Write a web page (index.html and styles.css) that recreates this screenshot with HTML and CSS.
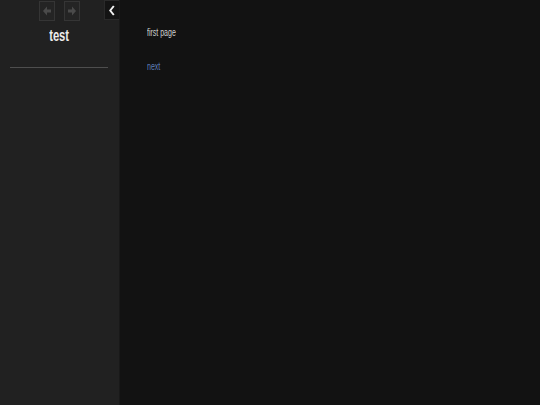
FILE: index.html
```html
<!DOCTYPE html>
<html>
<head>
<meta charset="utf-8">
<link rel="stylesheet" href="styles.css">
</head>
<body>
<div class="app">
  <aside class="sidebar">
    <div class="toolbar">
      <div class="nav">
        <button class="nav-btn" aria-label="back">
          <svg width="8" height="10" viewBox="0 0 8 10"><path d="M4 0.5 L0 5 L4 9.5 V6.5 H8 V3.5 H4 Z" fill="#4a4a4a"/></svg>
        </button>
        <button class="nav-btn" aria-label="forward">
          <svg width="8" height="10" viewBox="0 0 8 10"><path d="M4 0.5 L8 5 L4 9.5 V6.5 H0 V3.5 H4 Z" fill="#4a4a4a"/></svg>
        </button>
      </div>
      <button class="collapse" aria-label="collapse">
        <svg width="6" height="11" viewBox="0 0 6 11"><path d="M4.8 1 L1.2 5.5 L4.8 10" fill="none" stroke="#f2f2f2" stroke-width="2"/></svg>
      </button>
    </div>
    <h1 class="title"><span class="squeeze-bold">test</span></h1>
    <hr class="rule">
  </aside>
  <main class="content">
    <p class="page-text"><span class="squeeze">first page</span></p>
    <p class="page-link"><a href="#" class="squeeze">next</a></p>
  </main>
</div>
</body>
</html>
```

FILE: styles.css
```css
html, body {
  margin: 0;
  padding: 0;
  height: 100%;
  background: #121212;
  font-family: "Liberation Sans", Arial, sans-serif;
}

.app {
  display: flex;
  height: 405px;
}

.sidebar {
  width: 119px;
  flex: 0 0 119px;
  background: #212121;
  border-right: 1px solid #191919;
  display: flex;
  flex-direction: column;
}

.toolbar {
  display: flex;
  height: 21px;
}

.nav {
  display: flex;
  gap: 9px;
  margin-left: 39px;
  padding-top: 1px;
}

.nav-btn {
  width: 16px;
  height: 20px;
  box-sizing: border-box;
  border: 1px solid #353535;
  background: #242424;
  padding: 0;
  display: flex;
  align-items: center;
  justify-content: center;
}

.collapse {
  margin-left: auto;
  width: 15px;
  height: 20px;
  box-sizing: border-box;
  border: 1px solid #2a2a2a;
  border-right: none;
  background: #141414;
  padding: 0;
  display: flex;
  align-items: center;
  justify-content: center;
}

.title {
  margin: 5px 0 0 0;
  text-align: center;
  font-size: 17px;
  line-height: 20px;
  color: #ececec;
  font-weight: bold;
}

.squeeze-bold {
  display: inline-block;
  transform: scaleX(0.66);
}

.rule {
  margin: 21px 11px 0 10px;
  border: none;
  height: 1px;
  background: #4e4e4e;
}

.content {
  flex: 1;
  padding: 27px 0 0 27px;
}

.page-text,
.page-link {
  margin: 0;
  font-size: 10px;
  line-height: 12px;
}

.page-text {
  color: #d0d0d0;
}

.page-link {
  margin-top: 22px;
}

.page-link a {
  color: #5f7fb8;
  text-decoration: none;
}

.squeeze {
  display: inline-block;
  transform: scaleX(0.7);
  transform-origin: left center;
}
```
